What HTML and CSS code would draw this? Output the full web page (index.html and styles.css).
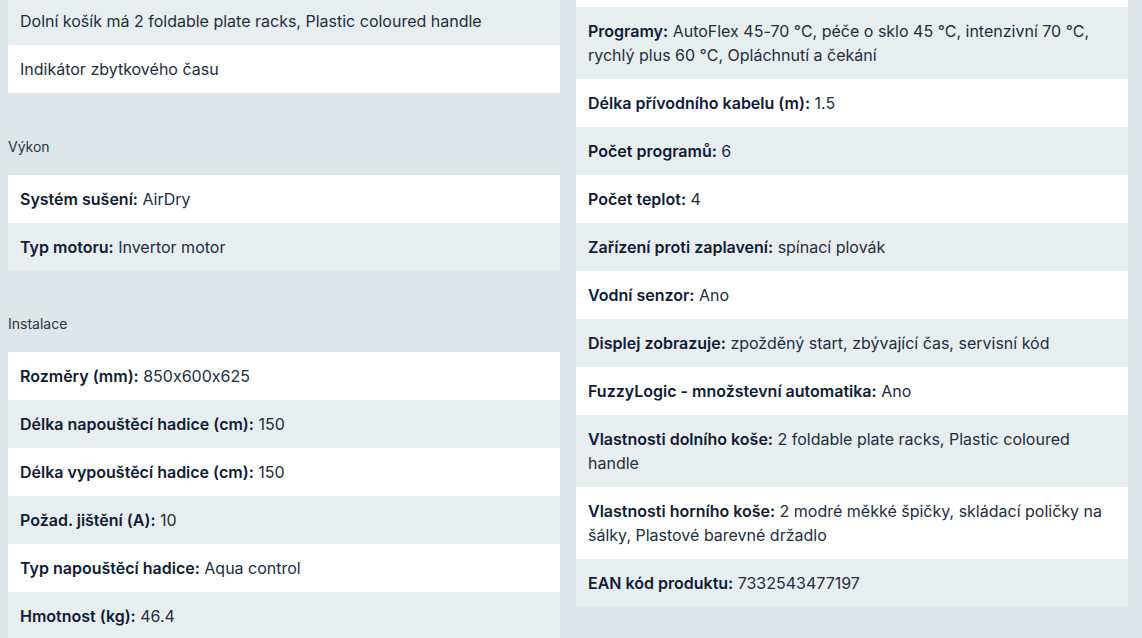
FILE: index.html
```html
<!DOCTYPE html>
<html lang="cs">
<head>
<meta charset="utf-8">
<title>Specifikace</title>
<link rel="stylesheet" href="styles.css">
</head>
<body>
<div class="specs">
  <div class="col col-left">
    <ul class="list">
      <li class="row"></li>
      <li class="row">Dolní košík má 2 foldable plate racks, Plastic coloured handle</li>
      <li class="row">Indikátor zbytkového času</li>
    </ul>
    <h3 class="section-title">Výkon</h3>
    <ul class="list">
      <li class="row"><b>Systém sušení:</b> AirDry</li>
      <li class="row"><b>Typ motoru:</b> Invertor motor</li>
    </ul>
    <h3 class="section-title">Instalace</h3>
    <ul class="list">
      <li class="row"><b>Rozměry (mm):</b> 850x600x625</li>
      <li class="row"><b>Délka napouštěcí hadice (cm):</b> 150</li>
      <li class="row"><b>Délka vypouštěcí hadice (cm):</b> 150</li>
      <li class="row"><b>Požad. jištění (A):</b> 10</li>
      <li class="row"><b>Typ napouštěcí hadice:</b> Aqua control</li>
      <li class="row"><b>Hmotnost (kg):</b> 46.4</li>
    </ul>
  </div>
  <div class="col col-right">
    <ul class="list">
      <li class="row"></li>
      <li class="row"><b>Programy:</b> AutoFlex 45-70 °C, péče o sklo 45 °C, intenzivní 70 °C, rychlý plus 60 °C, Opláchnutí a čekání</li>
      <li class="row"><b>Délka přívodního kabelu (m):</b> 1.5</li>
      <li class="row"><b>Počet programů:</b> 6</li>
      <li class="row"><b>Počet teplot:</b> 4</li>
      <li class="row"><b>Zařízení proti zaplavení:</b> spínací plovák</li>
      <li class="row"><b>Vodní senzor:</b> Ano</li>
      <li class="row"><b>Displej zobrazuje:</b> zpožděný start, zbývající čas, servisní kód</li>
      <li class="row"><b>FuzzyLogic - množstevní automatika:</b> Ano</li>
      <li class="row"><b>Vlastnosti dolního koše:</b> 2 foldable plate racks, Plastic coloured handle</li>
      <li class="row"><b>Vlastnosti horního koše:</b> 2 modré měkké špičky, skládací poličky na šálky, Plastové barevné držadlo</li>
      <li class="row"><b>EAN kód produktu:</b> 7332543477197</li>
    </ul>
  </div>
</div>
</body>
</html>
```

FILE: styles.css
```css
html, body {
  margin: 0;
  padding: 0;
  background: #dfe6e9;
}
body {
  font-family: "Inter", "Open Sans", sans-serif;
  font-feature-settings: "calt" 0;
  color: #222d3d;
  font-size: 16px;
  overflow: hidden;
  height: 638px;
}
.specs {
  display: grid;
  grid-template-columns: 552px 552px;
  column-gap: 16px;
  align-items: start;
  margin: -51px 0 0 8px;
}
.col-right {
  margin-top: 10px;
}
.list {
  list-style: none;
  margin: 0;
  padding: 0;
}
.row {
  min-height: 24px;
  padding: 12px 12px;
  line-height: 24px;
  background: #ffffff;
}
.row:nth-child(even) {
  background: #e8edef;
}
.row b {
  font-weight: 600;
  color: #0f1c33;
}
.section-title {
  margin: 0;
  padding: 43.5px 0 18px;
  font-size: 14px;
  line-height: 20px;
  font-weight: 400;
  color: #2a3441;
}
```
